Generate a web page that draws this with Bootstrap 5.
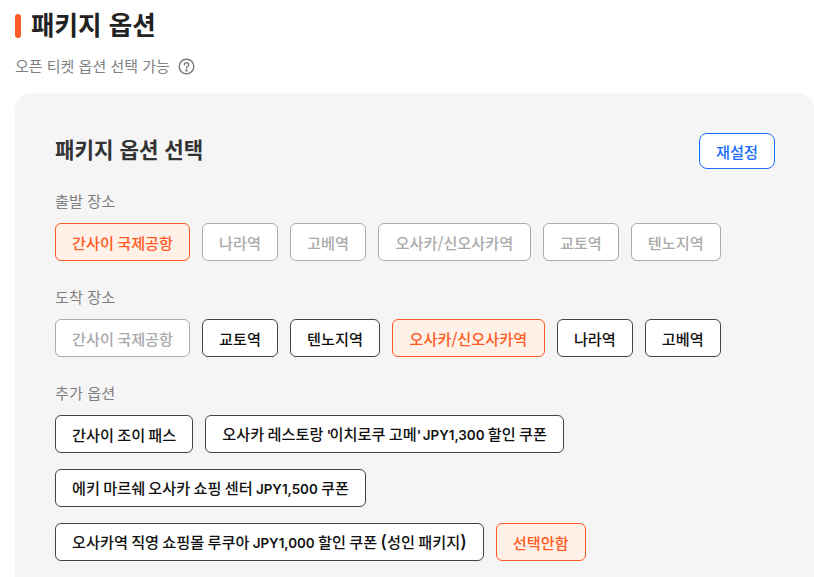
<!DOCTYPE html>
<html lang="ko"><head><meta charset="utf-8">
<link href="https://cdn.jsdelivr.net/npm/bootstrap@5.3.0/dist/css/bootstrap.min.css" rel="stylesheet">
<style>
html,body{height:577px;overflow:hidden;background:#fff}
body{font-family:"Noto Sans CJK KR","Inter",sans-serif;margin:0}
.page-wrap{padding-left:15px}
.sec-head{height:24px;margin-top:14px}
.sec-bar{width:6px;height:24px;background:#ff5b22;border-radius:3px}
.sec-title{font-size:25.6px;font-weight:700;color:#222;line-height:24px;margin:-4px 0 0 10px}
.sec-sub{font-size:15px;color:#808080;margin-top:17px;line-height:22px;gap:8px}
.panel{background:#f5f5f5;border-radius:16px 16px 0 0;margin-top:16px;padding:40px 39px 40px 40px;height:500px}
.panel-title{font-size:21.2px;font-weight:700;color:#333;margin:0;padding-bottom:4px}
.reset-btn{width:76px;height:36px;font-size:15.2px;font-weight:500;color:#1a6dff;background:#fff;border:1px solid #1a6dff;border-radius:8px;padding:0}
.grp-label{font-size:15.2px;color:#808080;line-height:20px;margin-bottom:13px}
.grp-first{margin-top:21px}
.opts{gap:16px 12px;margin-bottom:25px}
.opt{height:38px;font-size:15.2px;font-weight:500;padding:0 16px;border-radius:6px;background:#fff;border:1px solid #444;color:#111;white-space:nowrap;word-spacing:-1px}
.opt.off{border-color:#aaa;color:#aaa}
.opt.on{border-color:#ff5b22;color:#ff5b22;background:#fff0e8}
.opt-slash{min-width:153px}
.lat{font-family:"Inter",sans-serif;font-size:13.4px;font-weight:600}
.quo{letter-spacing:-1.5px}
.par{font-family:"Inter",sans-serif;font-size:18px;font-weight:500;line-height:1}
</style></head><body>
<div class="page-wrap">
<div class="sec-head d-flex align-items-center"><span class="sec-bar"></span><h2 class="sec-title">패키지 옵션</h2></div>
<div class="sec-sub d-flex align-items-center">오픈 티켓 옵션 선택 가능
<svg width="17" height="17" viewBox="0 0 17 17" fill="none" stroke="#777" stroke-width="1.4"><circle cx="8.5" cy="8.5" r="7.3"/><path d="M6.4 6.7a2.1 2.1 0 1 1 3.2 1.8c-.7.4-1.1.8-1.1 1.6" stroke-linecap="round"/><circle cx="8.5" cy="12.4" r=".5" fill="#777"/></svg></div>
<div class="panel">
<div class="d-flex justify-content-between align-items-center"><h3 class="panel-title">패키지 옵션 선택</h3><button class="btn reset-btn">재설정</button></div>
<div class="grp-label grp-first">출발 장소</div>
<div class="d-flex flex-wrap opts"><button class="btn opt on">간사이 국제공항</button><button class="btn opt off">나라역</button><button class="btn opt off">고베역</button><button class="btn opt off opt-slash">오사카/신오사카역</button><button class="btn opt off">교토역</button><button class="btn opt off">텐노지역</button></div>
<div class="grp-label">도착 장소</div>
<div class="d-flex flex-wrap opts"><button class="btn opt off">간사이 국제공항</button><button class="btn opt">교토역</button><button class="btn opt">텐노지역</button><button class="btn opt on opt-slash">오사카/신오사카역</button><button class="btn opt">나라역</button><button class="btn opt">고베역</button></div>
<div class="grp-label">추가 옵션</div>
<div class="d-flex flex-wrap opts"><button class="btn opt">간사이 조이 패스</button><button class="btn opt">오사카 레스토랑 <span class="lat quo">'</span>이치로쿠 고메<span class="lat quo">'</span> <span class="lat">JPY1,300</span> 할인 쿠폰</button><button class="btn opt">에키 마르쉐 오사카 쇼핑 센터 <span class="lat">JPY1,500</span> 쿠폰</button><button class="btn opt">오사카역 직영 쇼핑몰 루쿠아 <span class="lat">JPY1,000</span> 할인 쿠폰 <span class="par">(</span>성인 패키지<span class="par">)</span></button><button class="btn opt on">선택안함</button></div>
</div></div>
</body></html>
